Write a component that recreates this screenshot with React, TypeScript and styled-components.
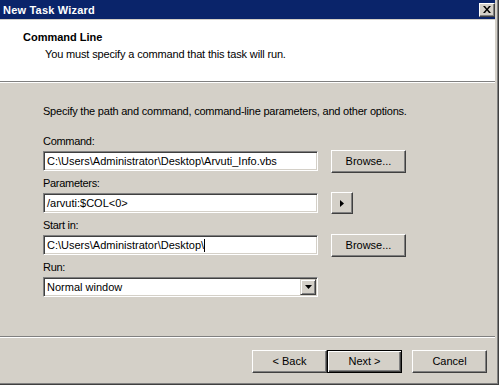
import React from "react";
import { createGlobalStyle, styled } from "styled-components";

const GlobalStyle = createGlobalStyle`
  html, body {
    margin: 0;
    padding: 0;
    background: #ffffff;
  }
  body {
    font-family: "Liberation Sans", Arial, sans-serif;
    font-size: 11px;
    color: #000;
  }
`;

function App() {
  return (
    <>
      <GlobalStyle />
      <Window>
        <TitleBar>
          <TitleText>New Task Wizard</TitleText>
          <CloseButton>
            <svg width="8" height="7" viewBox="0 0 8 7">
              <path d="M0 0h2l2 2.5L6 0h2L5 3.5 8 7H6L4 4.5 2 7H0l3-3.5z" fill="#000" />
            </svg>
          </CloseButton>
        </TitleBar>
        <HeaderPanel>
          <HeaderTitle>Command Line</HeaderTitle>
          <HeaderSub>You must specify a command that this task will run.</HeaderSub>
        </HeaderPanel>
        <Etched />
        <Body>
          <Intro>Specify the path and command, command-line parameters, and other options.</Intro>
          <Group>
            <Label>Command:</Label>
            <Row>
              <Field>C:\Users\Administrator\Desktop\Arvuti_Info.vbs</Field>
              <Button>Browse...</Button>
            </Row>
          </Group>
          <Group>
            <Label>Parameters:</Label>
            <Row>
              <Field>/arvuti:$COL&lt;0&gt;</Field>
              <ArrowButton>
                <svg width="4" height="7" viewBox="0 0 4 7">
                  <path d="M0 0l4 3.5L0 7z" fill="#000" />
                </svg>
              </ArrowButton>
            </Row>
          </Group>
          <Group>
            <Label>Start in:</Label>
            <Row>
              <Field>
                C:\Users\Administrator\Desktop\
                <Caret />
              </Field>
              <Button>Browse...</Button>
            </Row>
          </Group>
          <Group>
            <Label>Run:</Label>
            <Row>
              <Field>
                Normal window
                <DropButton>
                  <svg width="7" height="4" viewBox="0 0 7 4">
                    <path d="M0 0h7L3.5 4z" fill="#000" />
                  </svg>
                </DropButton>
              </Field>
            </Row>
          </Group>
        </Body>
        <Etched />
        <Footer>
          <Button>&lt; Back</Button>
          <Button $default>Next &gt;</Button>
          <Button $gap>Cancel</Button>
        </Footer>
      </Window>
    </>
  );
}

export default App;

const Window = styled.div`
  width: 495px;
  height: 381px;
  display: flex;
  flex-direction: column;
  background: #d4d0c8;
  border-right: 1px solid #404040;
  border-bottom: 1px solid #404040;
  box-shadow: inset -1px -1px 0 #808080, inset -3px -3px 0 #d4d0c8;
  padding: 0 3px 3px 0;
`;

const TitleBar = styled.div`
  height: 19px;
  background: #0a246a;
  display: flex;
  align-items: center;
  justify-content: space-between;
  padding: 0 0 0 3px;
  flex-shrink: 0;
`;

const TitleText = styled.span`
  color: #fff;
  font-weight: bold;
  font-size: 11px;
  letter-spacing: 0.2px;
`;

const CloseButton = styled.div`
  width: 14px;
  height: 12px;
  background: #d4d0c8;
  border: 1px solid;
  border-color: #fff #404040 #404040 #fff;
  box-shadow: inset -1px -1px 0 #808080;
  display: flex;
  align-items: center;
  justify-content: center;
`;

const HeaderPanel = styled.div`
  margin-top: 1px;
  height: 61px;
  box-sizing: border-box;
  background: #fff;
  padding: 11px 0 0 23px;
  flex-shrink: 0;
`;

const HeaderTitle = styled.div`
  font-weight: bold;
  line-height: 13px;
`;

const HeaderSub = styled.div`
  line-height: 13px;
  margin: 4px 0 0 22px;
  letter-spacing: -0.15px;
`;

const Etched = styled.div`
  border-top: 1px solid #808080;
  border-bottom: 1px solid #fff;
  height: 0;
  flex-shrink: 0;
`;

const Body = styled.div`
  height: 253px;
  box-sizing: border-box;
  padding: 22px 0 0 43px;
  display: flex;
  flex-direction: column;
  gap: 5px;
  flex-shrink: 0;
`;

const Intro = styled.div`
  line-height: 13px;
  margin-bottom: 12px;
  letter-spacing: -0.22px;
`;

const Group = styled.div`
  display: flex;
  flex-direction: column;
  gap: 2px;
`;

const Label = styled.div`
  line-height: 13px;
  letter-spacing: -0.3px;
`;

const Row = styled.div`
  display: flex;
  align-items: center;
  gap: 13px;
  height: 22px;
`;

const Field = styled.div`
  position: relative;
  width: 275px;
  height: 20px;
  box-sizing: border-box;
  background: #fff;
  border: 1px solid;
  border-color: #808080 #fff #fff #808080;
  box-shadow: inset 1px 1px 0 #404040, inset -1px -1px 0 #d4d0c8;
  padding: 0 3px;
  display: flex;
  align-items: center;
  line-height: 13px;
  white-space: nowrap;
`;

const Caret = styled.span`
  display: inline-block;
  width: 1px;
  height: 13px;
  background: #000;
`;

const DropButton = styled.div`
  position: absolute;
  right: 1px;
  top: 1px;
  width: 14px;
  height: 14px;
  background: #d4d0c8;
  border: 1px solid;
  border-color: #d4d0c8 #404040 #404040 #d4d0c8;
  box-shadow: inset 1px 1px 0 #fff, inset -1px -1px 0 #808080;
  display: flex;
  align-items: center;
  justify-content: center;
`;

const Button = styled.div<{ $default?: boolean; $gap?: boolean }>`
  width: 75px;
  height: 23px;
  box-sizing: border-box;
  background: #d4d0c8;
  display: flex;
  align-items: center;
  justify-content: center;
  line-height: 13px;
  margin-left: ${(p) => (p.$gap ? "10px" : "0")};
  border: 1px solid;
  border-color: ${(p) => (p.$default ? "#000" : "#fff #404040 #404040 #fff")};
  box-shadow: ${(p) =>
    p.$default
      ? "inset 1px 1px 0 #fff, inset -1px -1px 0 #404040, inset -2px -2px 0 #808080"
      : "inset -1px -1px 0 #808080"};
`;

const ArrowButton = styled.div`
  width: 22px;
  height: 22px;
  box-sizing: border-box;
  background: #d4d0c8;
  border: 1px solid;
  border-color: #fff #404040 #404040 #fff;
  box-shadow: inset -1px -1px 0 #808080;
  display: flex;
  align-items: center;
  justify-content: center;
`;

const Footer = styled.div`
  flex: 1;
  display: flex;
  justify-content: flex-end;
  align-items: flex-start;
  padding: 12px 8px 0 0;
`;
